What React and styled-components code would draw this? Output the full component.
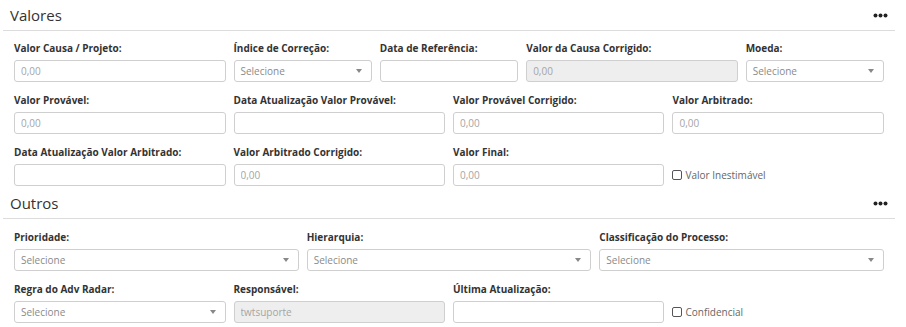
import styled, { createGlobalStyle } from "styled-components";

const GlobalStyle = createGlobalStyle`
  body {
    margin: 0;
    background: #fff;
    font-family: "Open Sans", "Liberation Sans", sans-serif;
    color: #333;
  }
`;

const Section = styled.section`
  margin: 0 11px 0 3px;
`;

const Header = styled.div`
  display: flex;
  align-items: center;
  justify-content: space-between;
  height: 30px;
  padding: 0 7px 0 7px;
  border-bottom: 1px solid #dcdcdc;
`;

const Title = styled.h2`
  margin: 0;
  font-size: 15px;
  font-weight: 400;
  color: #333;
`;

const Dots = styled.svg`
  display: block;
`;

const Grid = styled.div`
  display: grid;
  grid-template-columns: repeat(12, 1fr);
  column-gap: 8px;
  row-gap: 11px;
  padding: ${(p) => p.$top || 10}px 11px 2px 11px;
`;

const Field = styled.div`
  grid-column: span ${(p) => p.$span};
  display: flex;
  flex-direction: column;
  min-width: 0;
`;

const Label = styled.label`
  font-size: 10px;
  font-weight: 700;
  line-height: 14px;
  color: #333;
  margin-bottom: 5px;
  white-space: nowrap;
`;

const Input = styled.input`
  box-sizing: border-box;
  width: 100%;
  height: 22px;
  padding: 0 6px;
  border: 1px solid #cfcfcf;
  border-radius: 3px;
  background: ${(p) => (p.disabled ? "#eeeeee" : "#fff")};
  font-family: inherit;
  font-size: 10px;
  color: #999;
  outline: none;
  &::placeholder {
    color: #a5a5a5;
  }
`;

const SelectBox = styled.div`
  box-sizing: border-box;
  height: 22px;
  display: flex;
  align-items: center;
  justify-content: space-between;
  padding: 0 9px 0 6px;
  border: 1px solid #cfcfcf;
  border-radius: 3px;
  background: #fff;
  font-size: 10px;
  color: #8a8a8a;
`;

const Caret = styled.span`
  width: 0;
  height: 0;
  border-left: 3px solid transparent;
  border-right: 3px solid transparent;
  border-top: 4px solid #888;
`;

const CheckField = styled.label`
  grid-column: span ${(p) => p.$span};
  align-self: end;
  height: 22px;
  display: flex;
  align-items: center;
  gap: 3px;
  font-size: 10px;
  color: #666;
`;

const Box = styled.span`
  box-sizing: border-box;
  width: 10px;
  height: 10px;
  border: 1px solid #555;
  border-radius: 2px;
  background: #fff;
`;

const MoreDots = () => (
  <Dots width="15" height="5" viewBox="0 0 15 5">
    <circle cx="2.5" cy="2.5" r="2" fill="#222" />
    <circle cx="7.5" cy="2.5" r="2" fill="#222" />
    <circle cx="12.5" cy="2.5" r="2" fill="#222" />
  </Dots>
);

const TextField = ({ span, label, placeholder, disabled }) => (
  <Field $span={span}>
    <Label>{label}</Label>
    <Input placeholder={placeholder} disabled={disabled} />
  </Field>
);

const SelectField = ({ span, label }) => (
  <Field $span={span}>
    <Label>{label}</Label>
    <SelectBox>
      <span>Selecione</span>
      <Caret />
    </SelectBox>
  </Field>
);

const Check = ({ span, label }) => (
  <CheckField $span={span}>
    <Box />
    {label}
  </CheckField>
);

export default function App() {
  return (
    <>
      <GlobalStyle />
      <Section>
        <Header>
          <Title>Valores</Title>
          <MoreDots />
        </Header>
        <Grid>
          <TextField span={3} label="Valor Causa / Projeto:" placeholder="0,00" />
          <SelectField span={2} label="Índice de Correção:" />
          <TextField span={2} label="Data de Referência:" />
          <TextField span={3} label="Valor da Causa Corrigido:" placeholder="0,00" disabled />
          <SelectField span={2} label="Moeda:" />

          <TextField span={3} label="Valor Provável:" placeholder="0,00" />
          <TextField span={3} label="Data Atualização Valor Provável:" />
          <TextField span={3} label="Valor Provável Corrigido:" placeholder="0,00" />
          <TextField span={3} label="Valor Arbitrado:" placeholder="0,00" />

          <TextField span={3} label="Data Atualização Valor Arbitrado:" />
          <TextField span={3} label="Valor Arbitrado Corrigido:" placeholder="0,00" />
          <TextField span={3} label="Valor Final:" placeholder="0,00" />
          <Check span={3} label="Valor Inestimável" />
        </Grid>
      </Section>
      <Section>
        <Header>
          <Title>Outros</Title>
          <MoreDots />
        </Header>
        <Grid $top={11}>
          <SelectField span={4} label="Prioridade:" />
          <SelectField span={4} label="Hierarquia:" />
          <SelectField span={4} label="Classificação do Processo:" />

          <SelectField span={3} label="Regra do Adv Radar:" />
          <TextField span={3} label="Responsável:" placeholder="twtsuporte" disabled />
          <TextField span={3} label="Última Atualização:" />
          <Check span={3} label="Confidencial" />
        </Grid>
      </Section>
    </>
  );
}
